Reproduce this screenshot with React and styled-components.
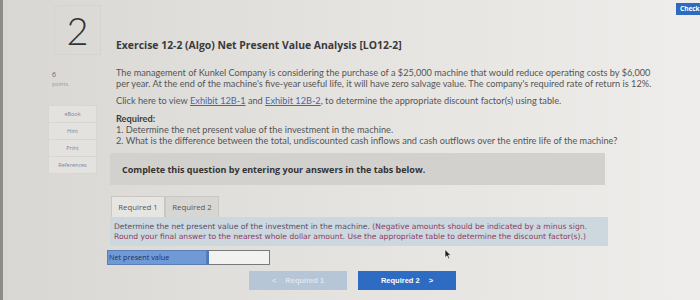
import React from 'react';
import styled, { createGlobalStyle } from 'styled-components';

const GlobalStyle = createGlobalStyle`
  html, body {
    margin: 0;
    padding: 0;
  }
  body {
    width: 700px;
    height: 300px;
    overflow: hidden;
    background: linear-gradient(90deg, #d9d7d4 0%, #e3e1de 40%, #e9e8e5 75%, #eeedeb 100%);
    font-family: "Open Sans", "Liberation Sans", sans-serif;
    color: #444;
  }
`;

const Page = styled.div`
  position: relative;
  display: flex;
  height: 300px;
  border-left: 3px solid #8e8c8a;
  box-sizing: border-box;
`;

const SideColumn = styled.div`
  width: 59px;
  padding-left: 45px;
  padding-top: 5px;
  flex-shrink: 0;
`;

const NumberBox = styled.div`
  margin-left: 6px;
  width: 47px;
  height: 50px;
  box-sizing: border-box;
  border: 1px solid #d6d4d1;
  display: flex;
  align-items: center;
  justify-content: center;
  font-family: "Lato", "Open Sans", sans-serif;
  font-weight: 300;
  font-size: 38px;
  color: #333;
`;

const Points = styled.div`
  margin-top: 15px;
  padding-left: 4px;
  font-size: 7px;
  line-height: 10px;
  color: #6d6b6a;
`;

const PointsLabel = styled.div`
  font-size: 5.5px;
  line-height: 9px;
  color: #9a9896;
`;

const SideButtons = styled.div`
  margin-top: 17px;
  display: flex;
  flex-direction: column;
  width: 49px;
`;

const SideButton = styled.div`
  height: 16px;
  border: 1px solid #d8d6d3;
  margin-top: -1px;
  display: flex;
  align-items: center;
  justify-content: center;
  font-size: 5.5px;
  color: #7884a0;
  background: #e3e2df;
`;

const Main = styled.div`
  width: 500px;
  padding-left: 3px;
  padding-top: 38px;
  flex-shrink: 0;
`;

const Title = styled.h1`
  margin: 0 0 0 6px;
  font-size: 10.4px;
  line-height: 15px;
  font-weight: 700;
  color: #3a3a3a;
  white-space: nowrap;
`;

const Para = styled.p`
  margin: ${(p) => p.$top}px 0 0 6px;
  font-family: "Lato", "Open Sans", sans-serif;
  font-size: 9.2px;
  line-height: 11px;
  color: #555;
  white-space: nowrap;
`;

const ExhibitLink = styled.span`
  color: #4a67a8;
  text-decoration: underline;
`;

const Bold = styled.span`
  font-weight: 700;
  color: #3c3c3c;
`;

const Notice = styled.div`
  margin-top: 7px;
  width: 495px;
  height: 32px;
  box-sizing: border-box;
  padding: 11px 0 0 12px;
  background: #d3d1ce;
  font-size: 9px;
  line-height: 11px;
  font-weight: 700;
  color: #333;
  white-space: nowrap;
`;

const Tabs = styled.div`
  display: flex;
  margin-top: 11px;
  padding-left: 1px;
`;

const Tab = styled.div`
  width: 54px;
  height: 21px;
  box-sizing: border-box;
  border: 1px solid #c9c7c4;
  border-bottom: none;
  display: flex;
  align-items: center;
  justify-content: center;
  font-size: 7.8px;
  color: #555;
  background: ${(p) => (p.$active ? '#e6e5e2' : '#d8d6d3')};
`;

const InfoBox = styled.div`
  width: 498px;
  height: 29px;
  box-sizing: border-box;
  padding: 5px 0 0 4px;
  background: #cdd7de;
  font-family: "DejaVu Sans", "Open Sans", sans-serif;
  font-size: 7.6px;
  line-height: 9.5px;
  color: #5b4d66;
  white-space: nowrap;
`;

const Hint = styled.span`
  color: #8c3d62;
`;

const InputRow = styled.div`
  display: flex;
  margin: 4px 0 0 -3px;
  height: 15px;
`;

const InputLabel = styled.div`
  width: 100px;
  box-sizing: border-box;
  padding-left: 1px;
  background: #6f9ad6;
  border: 1px solid #5a7fb6;
  font-size: 7.3px;
  line-height: 12px;
  color: #1f3060;
  white-space: nowrap;
`;

const AnswerInput = styled.div`
  width: 63px;
  box-sizing: border-box;
  background: #f2f2f1;
  border: 1px solid #77797c;
  border-left: 2px solid #4a78c2;
`;

const Nav = styled.div`
  display: flex;
  gap: 11px;
  margin: 6px 0 0 139px;
`;

const NavButton = styled.div`
  width: 98px;
  height: 19px;
  display: flex;
  align-items: center;
  justify-content: center;
  gap: 9px;
  font-family: "Liberation Sans", Arial, sans-serif;
  font-size: 7.5px;
  font-weight: 700;
  color: ${(p) => (p.$disabled ? '#dde5ee' : '#ffffff')};
  background: ${(p) => (p.$disabled ? '#b6c6d6' : '#2d6cc2')};
`;

const RightColumn = styled.div`
  flex: 1;
  display: flex;
  justify-content: flex-end;
  align-items: flex-start;
  padding-top: 3px;
`;

const CheckButton = styled.div`
  width: 24px;
  height: 12px;
  background: #2e6bbf;
  color: #fff;
  font-size: 6.5px;
  font-weight: 700;
  line-height: 12px;
  padding-left: 4px;
  box-sizing: border-box;
  overflow: hidden;
`;

const Cursor = styled.svg`
  position: absolute;
  left: 441px;
  top: 249px;
`;

export default function App() {
  return (
    <>
      <GlobalStyle />
      <Page>
        <SideColumn>
          <NumberBox>2</NumberBox>
          <Points>
            6
            <PointsLabel>points</PointsLabel>
          </Points>
          <SideButtons>
            <SideButton>eBook</SideButton>
            <SideButton>Hint</SideButton>
            <SideButton>Print</SideButton>
            <SideButton>References</SideButton>
          </SideButtons>
        </SideColumn>
        <Main>
          <Title>Exercise 12-2 (Algo) Net Present Value Analysis [LO12-2]</Title>
          <Para $top={14}>
            The management of Kunkel Company is considering the purchase of a $25,000 machine that would reduce operating costs by $6,000
            <br />
            per year. At the end of the machine's five-year useful life, it will have zero salvage value. The company's required rate of return is 12%.
          </Para>
          <Para $top={6}>
            Click here to view <ExhibitLink>Exhibit 12B-1</ExhibitLink> and <ExhibitLink>Exhibit 12B-2</ExhibitLink>, to determine the appropriate discount factor(s) using table.
          </Para>
          <Para $top={7}>
            <Bold>Required:</Bold>
            <br />
            1. Determine the net present value of the investment in the machine.
            <br />
            2. What is the difference between the total, undiscounted cash inflows and cash outflows over the entire life of the machine?
          </Para>
          <Notice>Complete this question by entering your answers in the tabs below.</Notice>
          <Tabs>
            <Tab $active>Required 1</Tab>
            <Tab>Required 2</Tab>
          </Tabs>
          <InfoBox>
            Determine the net present value of the investment in the machine. <Hint>(Negative amounts should be indicated by a minus sign.</Hint>
            <br />
            <Hint>Round your final answer to the nearest whole dollar amount. Use the appropriate table to determine the discount factor(s).)</Hint>
          </InfoBox>
          <InputRow>
            <InputLabel>Net present value</InputLabel>
            <AnswerInput />
          </InputRow>
          <Nav>
            <NavButton $disabled>
              <span>&lt;</span>
              <span>Required 1</span>
            </NavButton>
            <NavButton>
              <span>Required 2</span>
              <span>&gt;</span>
            </NavButton>
          </Nav>
        </Main>
        <RightColumn>
          <CheckButton>Check</CheckButton>
        </RightColumn>
        <Cursor width="8" height="11" viewBox="0 0 8 11">
          <path d="M1 0.5 L1 8.5 L3 6.8 L4.4 9.8 L5.6 9.2 L4.3 6.3 L6.8 6.2 Z" fill="#222" stroke="#fff" strokeWidth="0.6" />
        </Cursor>
      </Page>
    </>
  );
}
